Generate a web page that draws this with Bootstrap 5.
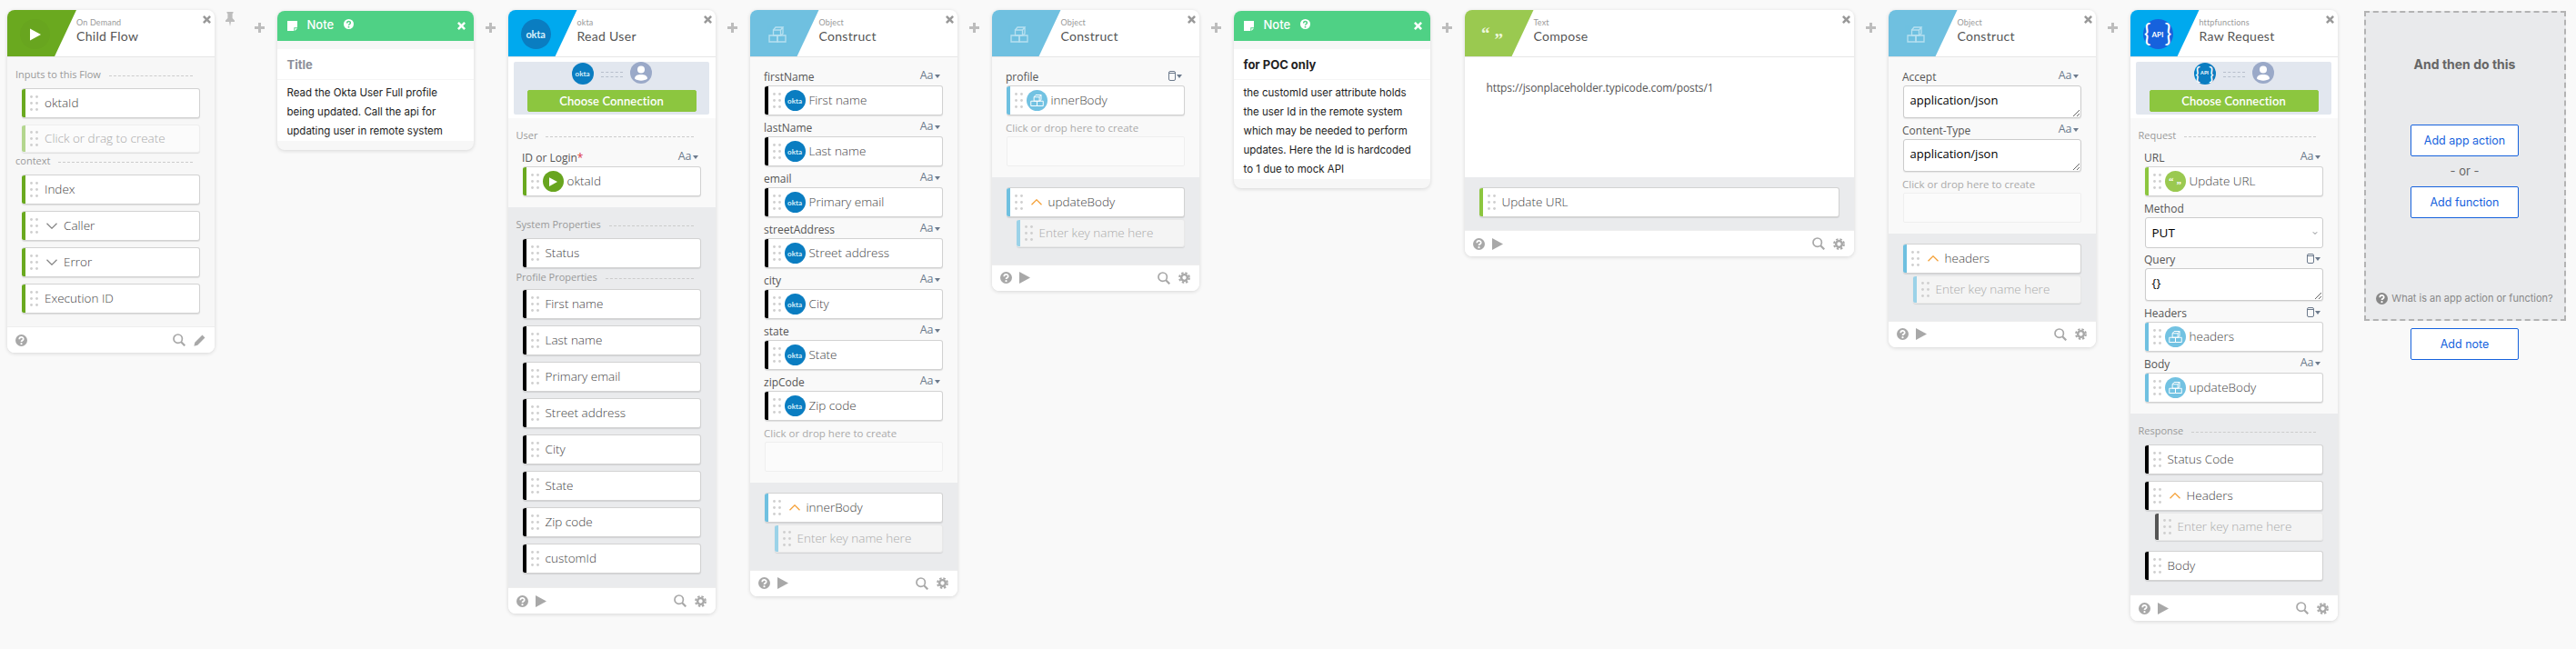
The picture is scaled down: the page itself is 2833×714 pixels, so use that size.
<!DOCTYPE html>
<html lang="en"><head><meta charset="utf-8"><title>Flow</title>
<link rel="stylesheet" href="https://cdn.jsdelivr.net/npm/bootstrap@5.3.0/dist/css/bootstrap.min.css">
<style>
html,body{height:100%;overflow:hidden}
body{background:#f9f9f9;font-family:"Open Sans","Liberation Sans",sans-serif;color:#555}
.canvas{padding:11px 0 0 8px;width:2833px;height:714px}
.flow-card{flex:0 0 228px;width:228px;background:#fff;border-radius:8px;box-shadow:0 1px 4px rgba(0,0,0,.14);overflow:hidden}
.wide-card{flex-basis:428px;width:428px}
.add-slot{flex:0 0 38px;height:38px;padding-top:14px;color:#bdbdbd;text-align:center;line-height:0}
.pin-slot{flex:0 0 34px;margin-top:-4px;color:#bdbdbd;text-align:center}
.first-add{flex-basis:34.5px;padding-right:4px}
.end-slot{flex:0 0 29px}
.hd{height:52px;border-bottom:1px solid #e6e6e6;position:relative}
.art{flex:0 0 76px;height:51px;clip-path:polygon(0 0,100% 0,68.5% 100%,0 100%);padding-left:14px;padding-top:10px}
.art-green{background:#6aa91f}.art-blue{background:#00a9ee}.art-sky{background:#6fc0e0}.art-lime{background:#9ac950}
.disc{width:33px;height:33px;border-radius:50%;color:#fff;flex:none}
.disc-green{background:#68a51f}.disc-okta{background:#0a7dc1}.disc-api{background:#1662dd}.disc-sky{background:#72c2e2}.disc-lime{background:#9ac950}
.faint{opacity:.5}
.okta-word{font:700 11px "Lato",sans-serif;letter-spacing:-.2px;color:#d8f0fb}
.hd-kicker{font:400 9px/11px "Lato",sans-serif;color:#999;margin-top:8px;letter-spacing:.15px}
.hd-title{font:400 14px/18px "Lato",sans-serif;color:#555;letter-spacing:.3px;margin-top:1px}
.close-x{position:absolute;right:4px;top:6px;color:#999;line-height:0}
.pane-w{background:#f9f9f9;padding:13px 16px 12px}
.pane-l{background:#f7f7f7;padding:11px 16px 14px}
.pane-g{background:#eaebed;padding:11px 16px 18.5px}
.pane-list{padding-bottom:15px}
.pane-req{padding-top:11px}
.pane-white{background:#fff;height:132px;padding:24px;font-size:12px;line-height:20px;color:#555;letter-spacing:-.1px}
.sec-head{display:flex;align-items:center;gap:9px;height:16px;margin:0 8px 7px -7px;font-size:11px;color:#999;white-space:nowrap}
.sec-head::after{content:"";flex:1;border-bottom:1px dashed #ccc;margin-top:3px}
.sec-up{margin-top:2px;margin-bottom:5px}
.sec-tight{margin-top:1px}
.sec-req{margin-bottom:8px}
.f-label{height:18px;display:flex;justify-content:space-between;align-items:center;font-size:12px;color:#555;margin-left:-.5px}
.f-hint{color:#aaa;font-size:11.5px}
.aa{color:#6c7a8c;font-size:12.5px;display:flex;align-items:center;gap:1px;margin-right:3px;margin-top:-3px}
.aa svg{flex:none}
.fld{height:33px;background:#fff;border:1px solid #d2d2d2;border-left:0;border-radius:3px;box-shadow:0 1px 1px rgba(0,0,0,.1);display:flex;align-items:center;font-size:13.5px;font-weight:300;color:#444;overflow:hidden;margin-bottom:7px}
.fld .bar{flex:0 0 4px;align-self:stretch}
.g{flex:0 0 auto;color:#cfcfcf;margin:0 7px 0 5px}
.bar-green{background:#6aa91f}.bar-black{background:#000}.bar-sky{background:#6fc0e0}.bar-lime{background:#8cc63f}.bar-pale{background:#9bd2e8}.bar-dark{background:#555}.bar-palegreen{background:#b4d68f}
.tail{margin-bottom:5px}
.flush{margin-bottom:2px}
.last{margin-bottom:0}
.ghost{height:31px;background:#f4f4f4;border-color:#e8e8e8;color:#aaa;margin-left:11px;margin-bottom:0}
.ghost-w{background:#fbfbfb;margin-left:0;margin-bottom:1px;border-color:#eee}
.ghost-i{margin-bottom:11px}
.mini{width:23px;height:23px;border-radius:50%;flex:none;color:#fff;margin:0 4px 0 -3px}
.mini .okta-word{font-size:8px;letter-spacing:0}
.chev{flex:none;margin:0 7px 0 2px;color:#888}
.chev-up{color:#f5a23a}
.drop{height:33px;background:#fbfbfb;border:1px solid #efefef;border-radius:2px}
.conn-wrap{background:#fff;height:67px;padding:5px 6.5px 4px}
.conn{background:#e2e7ef;height:58px;border-radius:2px;padding:0 14.5px;display:flex;flex-direction:column}
.conn-row{height:31px;gap:8px}
.conn-btn{height:24px;line-height:22px;padding:0;background:#8cc63f;border:1px solid #8cc63f;border-radius:2px;color:#fff;font:600 13px/22px "Lato",sans-serif;letter-spacing:.1px;width:100%}
.conn-disc{width:24px;height:24px;border-radius:50%;background:#0a7dc1;color:#fff;margin-top:1px}
.conn-disc .okta-word{font-size:8px;letter-spacing:0}
.dash-a{width:24px;height:6px;border-top:1px dashed #b7bfcc;border-bottom:1px dashed #b7bfcc;margin-top:-4px}
.txt-ctrl{height:36px;min-height:36px;padding:5px 7px;font-size:13px;line-height:20px;color:#000;border:1px solid #ccc;border-radius:3px;box-shadow:0 1px 1px rgba(0,0,0,.08);margin-bottom:5px;display:block;width:100%}
.sel-ctrl{height:34px;padding:3px 7px;font-size:13.5px;color:#000;border:1px solid #ccc;border-radius:3px;margin-bottom:4px;background-size:8px 5px;background-position:right 4px center}
.foot{height:29px;background:#fff;padding:0 10px 0 9px;color:#a8a8a8;border-top:1px solid #eee}
.foot .ms-auto{margin-right:1px}
.note-card{flex:0 0 216px;width:216px;margin-top:1px;background:#f7f7f7;border-radius:8px;box-shadow:0 1px 4px rgba(0,0,0,.14);overflow:hidden;padding-bottom:10px}
.note-hd{height:33px;background:#4fd185;color:#fff;padding:0 9px 0 11px;font:500 13px "Inter",sans-serif}
.note-name{margin-left:11px;margin-top:-4px}
.note-hd .qm{--q:#4fd185;margin:-4px 0 0 11px}
.note-title{margin-top:9px;height:34px;background:#fff;border-bottom:1px solid #f5f5f5;padding:0 11px;font:700 13px/34px "Inter",sans-serif;color:#1f1f1f}
.title-dim{color:#8c8f99}
.note-body{background:#fff;padding:4px 10px 0 11px;font:400 11.5px/21px "Inter",sans-serif;color:#222}
.end-col{flex:0 0 222px;width:222px;margin-top:1px}
.end-box{width:100%;height:341px;background:#e9eaec;border:2px dashed #b3b3b3;padding-top:47px;margin-bottom:8px;font:400 13px "Inter",sans-serif}
.end-title{font:700 14px/20px "Inter",sans-serif;color:#666;margin-bottom:56px}
.act-btn{width:118.5px;height:35px;background:#fff;border:1px solid #1662dd;border-radius:2px;color:#1662dd;font:400 12.5px "Inter",sans-serif;padding:0;flex:none}
.or-text{height:33px;line-height:33px;color:#666}
.end-help{margin-top:auto;margin-bottom:16px;font-size:11px;color:#888;gap:4px;white-space:nowrap}
.user-pic{flex:none}
.quote-big{font:700 19px/1 "Liberation Serif",serif;gap:5px;color:#eef7dc}
.quote-big span:first-child{margin-top:-2px}
.quote-big span:last-child{margin-top:12px}
.quote-small{font:700 11px/1 "Liberation Serif",serif;gap:3px}
.quote-small span:first-child{margin-top:-1px}
.quote-small span:last-child{margin-top:7px}
.brace{font:400 26px/1 "Lato",sans-serif;margin-top:-3px}
.api-in{font:700 8px/1 "Lato",sans-serif;margin:0 1px}
.api-tiny .brace{font-size:19px;margin-top:-2px}
.api-tiny .api-in{font-size:5.5px;margin:0}
.compose-pane{padding-bottom:14px}
.compose-pane .fld{margin-bottom:0}
</style></head>
<body>
<svg width="0" height="0" class="position-absolute">
<symbol id="i-x" viewBox="0 0 10 10"><path fill="currentColor" d="M2 0 5 3 8 0l2 2-3 3 3 3-2 2-3-3-3 3-2-2 3-3-3-3z"/></symbol>
<symbol id="i-grip" viewBox="0 0 9 17"><g fill="currentColor"><circle cx="1.5" cy="1.5" r="1.4"/><circle cx="7.5" cy="1.5" r="1.4"/><circle cx="1.5" cy="8.5" r="1.4"/><circle cx="7.5" cy="8.5" r="1.4"/><circle cx="1.5" cy="15.5" r="1.4"/><circle cx="7.5" cy="15.5" r="1.4"/></g></symbol>
<symbol id="i-help" viewBox="0 0 13 13"><circle cx="6.5" cy="6.5" r="6.5" fill="currentColor"/><path fill="none" stroke="var(--q,#fff)" stroke-width="1.8" d="M4.3 5.2c0-3 4.4-3 4.4-.3 0 1.6-2.2 1.6-2.2 3.2"/><circle cx="6.5" cy="10.2" r="1.1" fill="var(--q,#fff)"/></symbol>
<symbol id="i-play" viewBox="0 0 12 13"><path fill="currentColor" d="M0 0 12 6.5 0 13z"/></symbol>
<symbol id="i-search" viewBox="0 0 14 14"><circle cx="5.7" cy="5.7" r="4.7" fill="none" stroke="currentColor" stroke-width="1.7"/><path stroke="currentColor" stroke-width="2.2" d="m9 9 4.3 4.3"/></symbol>
<symbol id="i-gear" viewBox="0 0 14 14"><circle cx="7" cy="7" r="3.6" fill="none" stroke="currentColor" stroke-width="2.6"/><circle cx="7" cy="7" r="5.8" fill="none" stroke="currentColor" stroke-width="2.2" stroke-dasharray="2.6 2"/></symbol>
<symbol id="i-pencil" viewBox="0 0 14 14"><path fill="currentColor" d="M10.2.6 13.4 3.8 4.6 12.6.4 13.6 1.4 9.4z"/></symbol>
<symbol id="i-chev" viewBox="0 0 12 7"><path fill="none" stroke="currentColor" stroke-width="1.3" d="m.5.7 5.5 5.5L11.5.7"/></symbol>
<symbol id="i-up" viewBox="0 0 12 7"><path fill="none" stroke="currentColor" stroke-width="1.3" d="M.5 6.3 6 .8l5.5 5.5"/></symbol>
<symbol id="i-cube" viewBox="0 0 20 20"><g fill="none" stroke="currentColor" stroke-width="1.3"><path d="M5.5 5h8v6h-8z"/><path d="M5.5 5 8 2h8l-2.5 3M16 2v7l-2.5 2"/><path d="M1 11h9v7H1z"/><path d="M10 11h9v7h-9z"/></g></symbol>
<symbol id="i-note" viewBox="0 0 12 12"><path fill="currentColor" d="M0 0h12v8H8v4H0zM9 9h3l-3 3z"/></symbol>
<symbol id="i-plus" viewBox="0 0 11 11"><path fill="currentColor" d="M4 0h3v4h4v3H7v4H4V7H0V4h4z"/></symbol>
<symbol id="i-pin" viewBox="0 0 10 16"><path fill="currentColor" d="M1.5 0h7v1.2L7.6 2v5L10 9.6V11H6l-1 5-1-5H0V9.6L2.4 7V2l-.9-.8z"/></symbol>
<symbol id="i-can" viewBox="0 0 8 11"><g fill="none" stroke="currentColor"><rect x=".5" y=".5" width="7" height="10" rx="1.5"/><path d="M.5 2.5h7"/></g></symbol>
<symbol id="i-caret" viewBox="0 0 6 4"><path fill="currentColor" d="M0 0h6L3 4z"/></symbol>
<symbol id="i-user" viewBox="0 0 24 24"><circle cx="12" cy="12" r="12" fill="#9aa9c8"/><circle cx="12" cy="8.6" r="4" fill="#fff"/><path fill="#fff" d="M5 18.6c0-3.4 3-4.6 7-4.6s7 1.2 7 4.6c-3 2.8-11 2.8-14 0z"/></symbol>
</svg>

<main class="canvas d-flex align-items-start">

<section class="flow-card">
<header class="hd d-flex"><div class="art art-green"><div class="disc disc-green d-flex align-items-center justify-content-center"><svg width="12" height="14"><use href="#i-play"/></svg></div></div><div><div class="hd-kicker">On Demand</div><div class="hd-title">Child Flow</div></div><span class="close-x"><svg width="9" height="9"><use href="#i-x"/></svg></span></header>
<div class="pane-l">
<div class="sec-head">Inputs to this Flow</div>
<div class="fld"><span class="bar bar-green"></span><svg class="g" width="9" height="17"><use href="#i-grip"/></svg>oktaId</div>
<div class="fld ghost ghost-w"><span class="bar bar-palegreen"></span><svg class="g" width="9" height="17"><use href="#i-grip"/></svg>Click or drag to create</div>
<div class="sec-head sec-tight">context</div>
<div class="fld"><span class="bar bar-green"></span><svg class="g" width="9" height="17"><use href="#i-grip"/></svg>Index</div>
<div class="fld"><span class="bar bar-green"></span><svg class="g" width="9" height="17"><use href="#i-grip"/></svg><svg class="chev" width="12" height="7"><use href="#i-chev"/></svg>Caller</div>
<div class="fld"><span class="bar bar-green"></span><svg class="g" width="9" height="17"><use href="#i-grip"/></svg><svg class="chev" width="12" height="7"><use href="#i-chev"/></svg>Error</div>
<div class="fld last"><span class="bar bar-green"></span><svg class="g" width="9" height="17"><use href="#i-grip"/></svg>Execution ID</div>
</div>
<footer class="foot d-flex align-items-center gap-2"><svg width="13" height="13"><use href="#i-help"/></svg><svg class="ms-auto" width="14" height="14"><use href="#i-search"/></svg><svg width="13" height="13"><use href="#i-pencil"/></svg></footer>
</section>

<div class="pin-slot"><svg width="10" height="16"><use href="#i-pin"/></svg></div>
<div class="add-slot first-add"><svg width="11" height="11"><use href="#i-plus"/></svg></div>

<section class="note-card">
<div class="note-hd d-flex align-items-center"><svg width="11" height="11"><use href="#i-note"/></svg><span class="note-name">Note</span><svg class="qm" width="11" height="11"><use href="#i-help"/></svg><svg class="ms-auto" width="9" height="9"><use href="#i-x"/></svg></div>
<div class="note-title title-dim">Title</div>
<div class="note-body">Read the Okta User Full profile being updated. Call the api for updating user in remote system</div>
</section>

<div class="add-slot"><svg width="11" height="11"><use href="#i-plus"/></svg></div>

<section class="flow-card">
<header class="hd d-flex"><div class="art art-blue"><div class="disc disc-okta d-flex align-items-center justify-content-center"><span class="okta-word">okta</span></div></div><div><div class="hd-kicker">okta</div><div class="hd-title">Read User</div></div><span class="close-x"><svg width="9" height="9"><use href="#i-x"/></svg></span></header>
<div class="conn-wrap"><div class="conn"><div class="conn-row d-flex justify-content-center align-items-start"><span class="conn-disc d-flex align-items-center justify-content-center"><span class="okta-word">okta</span></span><span class="dash-a align-self-center"></span><svg class="user-pic" width="24" height="24"><use href="#i-user"/></svg></div><button type="button" class="btn conn-btn">Choose Connection</button></div></div>
<div class="pane-w pane-req"><div class="sec-head sec-req">User</div>
<div class="f-label"><span>ID or Login<span class="text-danger">*</span></span><span class="aa">Aa<svg width="6" height="4"><use href="#i-caret"/></svg></span></div>
<div class="fld last"><span class="bar bar-green"></span><svg class="g" width="9" height="17"><use href="#i-grip"/></svg><span class="mini disc-green d-flex align-items-center justify-content-center"><svg width="9" height="10"><use href="#i-play"/></svg></span>oktaId</div></div>
<div class="pane-g pane-list">
<div class="sec-head">System Properties</div>
<div class="fld flush"><span class="bar bar-black"></span><svg class="g" width="9" height="17"><use href="#i-grip"/></svg>Status</div>
<div class="sec-head sec-up">Profile Properties</div>
<div class="fld"><span class="bar bar-black"></span><svg class="g" width="9" height="17"><use href="#i-grip"/></svg>First name</div>
<div class="fld"><span class="bar bar-black"></span><svg class="g" width="9" height="17"><use href="#i-grip"/></svg>Last name</div>
<div class="fld"><span class="bar bar-black"></span><svg class="g" width="9" height="17"><use href="#i-grip"/></svg>Primary email</div>
<div class="fld"><span class="bar bar-black"></span><svg class="g" width="9" height="17"><use href="#i-grip"/></svg>Street address</div>
<div class="fld"><span class="bar bar-black"></span><svg class="g" width="9" height="17"><use href="#i-grip"/></svg>City</div>
<div class="fld"><span class="bar bar-black"></span><svg class="g" width="9" height="17"><use href="#i-grip"/></svg>State</div>
<div class="fld"><span class="bar bar-black"></span><svg class="g" width="9" height="17"><use href="#i-grip"/></svg>Zip code</div>
<div class="fld last"><span class="bar bar-black"></span><svg class="g" width="9" height="17"><use href="#i-grip"/></svg>customId</div>
</div>
<footer class="foot d-flex align-items-center gap-2"><svg width="13" height="13"><use href="#i-help"/></svg><svg width="12" height="13"><use href="#i-play"/></svg><svg class="ms-auto" width="14" height="14"><use href="#i-search"/></svg><svg width="13" height="13"><use href="#i-gear"/></svg></footer>
</section>

<div class="add-slot"><svg width="11" height="11"><use href="#i-plus"/></svg></div>

<section class="flow-card">
<header class="hd d-flex"><div class="art art-sky"><div class="disc d-flex align-items-center justify-content-center"><svg class="faint" width="20" height="20"><use href="#i-cube"/></svg></div></div><div><div class="hd-kicker">Object</div><div class="hd-title">Construct</div></div><span class="close-x"><svg width="9" height="9"><use href="#i-x"/></svg></span></header>
<div class="pane-w">
<div class="f-label"><span>firstName</span><span class="aa">Aa<svg width="6" height="4"><use href="#i-caret"/></svg></span></div>
<div class="fld tail"><span class="bar bar-black"></span><svg class="g" width="9" height="17"><use href="#i-grip"/></svg><span class="mini disc-okta d-flex align-items-center justify-content-center"><span class="okta-word">okta</span></span>First name</div>
<div class="f-label"><span>lastName</span><span class="aa">Aa<svg width="6" height="4"><use href="#i-caret"/></svg></span></div>
<div class="fld tail"><span class="bar bar-black"></span><svg class="g" width="9" height="17"><use href="#i-grip"/></svg><span class="mini disc-okta d-flex align-items-center justify-content-center"><span class="okta-word">okta</span></span>Last name</div>
<div class="f-label"><span>email</span><span class="aa">Aa<svg width="6" height="4"><use href="#i-caret"/></svg></span></div>
<div class="fld tail"><span class="bar bar-black"></span><svg class="g" width="9" height="17"><use href="#i-grip"/></svg><span class="mini disc-okta d-flex align-items-center justify-content-center"><span class="okta-word">okta</span></span>Primary email</div>
<div class="f-label"><span>streetAddress</span><span class="aa">Aa<svg width="6" height="4"><use href="#i-caret"/></svg></span></div>
<div class="fld tail"><span class="bar bar-black"></span><svg class="g" width="9" height="17"><use href="#i-grip"/></svg><span class="mini disc-okta d-flex align-items-center justify-content-center"><span class="okta-word">okta</span></span>Street address</div>
<div class="f-label"><span>city</span><span class="aa">Aa<svg width="6" height="4"><use href="#i-caret"/></svg></span></div>
<div class="fld tail"><span class="bar bar-black"></span><svg class="g" width="9" height="17"><use href="#i-grip"/></svg><span class="mini disc-okta d-flex align-items-center justify-content-center"><span class="okta-word">okta</span></span>City</div>
<div class="f-label"><span>state</span><span class="aa">Aa<svg width="6" height="4"><use href="#i-caret"/></svg></span></div>
<div class="fld tail"><span class="bar bar-black"></span><svg class="g" width="9" height="17"><use href="#i-grip"/></svg><span class="mini disc-okta d-flex align-items-center justify-content-center"><span class="okta-word">okta</span></span>State</div>
<div class="f-label"><span>zipCode</span><span class="aa">Aa<svg width="6" height="4"><use href="#i-caret"/></svg></span></div>
<div class="fld tail"><span class="bar bar-black"></span><svg class="g" width="9" height="17"><use href="#i-grip"/></svg><span class="mini disc-okta d-flex align-items-center justify-content-center"><span class="okta-word">okta</span></span>Zip code</div>
<div class="f-label f-hint">Click or drop here to create</div>
<div class="drop"></div>
</div>
<div class="pane-g">
<div class="fld flush"><span class="bar bar-sky"></span><svg class="g" width="9" height="17"><use href="#i-grip"/></svg><svg class="chev chev-up" width="12" height="7"><use href="#i-up"/></svg>innerBody</div>
<div class="fld ghost"><span class="bar bar-pale"></span><svg class="g" width="9" height="17"><use href="#i-grip"/></svg>Enter key name here</div>
</div>
<footer class="foot d-flex align-items-center gap-2"><svg width="13" height="13"><use href="#i-help"/></svg><svg width="12" height="13"><use href="#i-play"/></svg><svg class="ms-auto" width="14" height="14"><use href="#i-search"/></svg><svg width="13" height="13"><use href="#i-gear"/></svg></footer>
</section>

<div class="add-slot"><svg width="11" height="11"><use href="#i-plus"/></svg></div>

<section class="flow-card">
<header class="hd d-flex"><div class="art art-sky"><div class="disc d-flex align-items-center justify-content-center"><svg class="faint" width="20" height="20"><use href="#i-cube"/></svg></div></div><div><div class="hd-kicker">Object</div><div class="hd-title">Construct</div></div><span class="close-x"><svg width="9" height="9"><use href="#i-x"/></svg></span></header>
<div class="pane-w">
<div class="f-label"><span>profile</span><span class="aa"><svg width="8" height="11"><use href="#i-can"/></svg><svg width="6" height="4"><use href="#i-caret"/></svg></span></div>
<div class="fld tail"><span class="bar bar-sky"></span><svg class="g" width="9" height="17"><use href="#i-grip"/></svg><span class="mini disc-sky d-flex align-items-center justify-content-center"><svg width="15" height="15"><use href="#i-cube"/></svg></span>innerBody</div>
<div class="f-label f-hint">Click or drop here to create</div>
<div class="drop"></div>
</div>
<div class="pane-g">
<div class="fld flush"><span class="bar bar-sky"></span><svg class="g" width="9" height="17"><use href="#i-grip"/></svg><svg class="chev chev-up" width="12" height="7"><use href="#i-up"/></svg>updateBody</div>
<div class="fld ghost"><span class="bar bar-pale"></span><svg class="g" width="9" height="17"><use href="#i-grip"/></svg>Enter key name here</div>
</div>
<footer class="foot d-flex align-items-center gap-2"><svg width="13" height="13"><use href="#i-help"/></svg><svg width="12" height="13"><use href="#i-play"/></svg><svg class="ms-auto" width="14" height="14"><use href="#i-search"/></svg><svg width="13" height="13"><use href="#i-gear"/></svg></footer>
</section>

<div class="add-slot"><svg width="11" height="11"><use href="#i-plus"/></svg></div>

<section class="note-card">
<div class="note-hd d-flex align-items-center"><svg width="11" height="11"><use href="#i-note"/></svg><span class="note-name">Note</span><svg class="qm" width="11" height="11"><use href="#i-help"/></svg><svg class="ms-auto" width="9" height="9"><use href="#i-x"/></svg></div>
<div class="note-title">for POC only</div>
<div class="note-body">the customId user attribute holds the user Id in the remote system which may be needed to perform updates. Here the Id is hardcoded to 1 due to mock API</div>
</section>

<div class="add-slot"><svg width="11" height="11"><use href="#i-plus"/></svg></div>

<section class="flow-card wide-card">
<header class="hd d-flex"><div class="art art-lime"><div class="disc d-flex align-items-center justify-content-center quote-big"><span>“</span><span>”</span></div></div><div><div class="hd-kicker">Text</div><div class="hd-title">Compose</div></div><span class="close-x"><svg width="9" height="9"><use href="#i-x"/></svg></span></header>
<div class="pane-white">https://jsonplaceholder.typicode.com/posts/1</div>
<div class="pane-g compose-pane">
<div class="fld"><span class="bar bar-lime"></span><svg class="g" width="9" height="17"><use href="#i-grip"/></svg>Update URL</div>
</div>
<footer class="foot d-flex align-items-center gap-2"><svg width="13" height="13"><use href="#i-help"/></svg><svg width="12" height="13"><use href="#i-play"/></svg><svg class="ms-auto" width="14" height="14"><use href="#i-search"/></svg><svg width="13" height="13"><use href="#i-gear"/></svg></footer>
</section>

<div class="add-slot"><svg width="11" height="11"><use href="#i-plus"/></svg></div>

<section class="flow-card">
<header class="hd d-flex"><div class="art art-sky"><div class="disc d-flex align-items-center justify-content-center"><svg class="faint" width="20" height="20"><use href="#i-cube"/></svg></div></div><div><div class="hd-kicker">Object</div><div class="hd-title">Construct</div></div><span class="close-x"><svg width="9" height="9"><use href="#i-x"/></svg></span></header>
<div class="pane-w">
<div class="f-label"><span>Accept</span><span class="aa">Aa<svg width="6" height="4"><use href="#i-caret"/></svg></span></div>
<textarea class="form-control txt-ctrl" rows="1">application/json</textarea>
<div class="f-label"><span>Content-Type</span><span class="aa">Aa<svg width="6" height="4"><use href="#i-caret"/></svg></span></div>
<textarea class="form-control txt-ctrl" rows="1">application/json</textarea>
<div class="f-label f-hint">Click or drop here to create</div>
<div class="drop"></div>
</div>
<div class="pane-g">
<div class="fld flush"><span class="bar bar-sky"></span><svg class="g" width="9" height="17"><use href="#i-grip"/></svg><svg class="chev chev-up" width="12" height="7"><use href="#i-up"/></svg>headers</div>
<div class="fld ghost"><span class="bar bar-pale"></span><svg class="g" width="9" height="17"><use href="#i-grip"/></svg>Enter key name here</div>
</div>
<footer class="foot d-flex align-items-center gap-2"><svg width="13" height="13"><use href="#i-help"/></svg><svg width="12" height="13"><use href="#i-play"/></svg><svg class="ms-auto" width="14" height="14"><use href="#i-search"/></svg><svg width="13" height="13"><use href="#i-gear"/></svg></footer>
</section>

<div class="add-slot"><svg width="11" height="11"><use href="#i-plus"/></svg></div>

<section class="flow-card">
<header class="hd d-flex"><div class="art art-blue"><div class="disc disc-api d-flex align-items-center justify-content-center"><span class="brace">{</span><span class="api-in">API</span><span class="brace">}</span></div></div><div><div class="hd-kicker">httpfunctions</div><div class="hd-title">Raw Request</div></div><span class="close-x"><svg width="9" height="9"><use href="#i-x"/></svg></span></header>
<div class="conn-wrap"><div class="conn"><div class="conn-row d-flex justify-content-center align-items-start"><span class="conn-disc disc-api d-flex align-items-center justify-content-center api-tiny"><span class="brace">{</span><span class="api-in">API</span><span class="brace">}</span></span><span class="dash-a align-self-center"></span><svg class="user-pic" width="24" height="24"><use href="#i-user"/></svg></div><button type="button" class="btn conn-btn">Choose Connection</button></div></div>
<div class="pane-w pane-req"><div class="sec-head sec-req">Request</div>
<div class="f-label"><span>URL</span><span class="aa">Aa<svg width="6" height="4"><use href="#i-caret"/></svg></span></div>
<div class="fld tail"><span class="bar bar-lime"></span><svg class="g" width="9" height="17"><use href="#i-grip"/></svg><span class="mini disc-lime d-flex align-items-center justify-content-center quote-small"><span>“</span><span>”</span></span>Update URL</div>
<div class="f-label"><span>Method</span></div>
<select class="form-select sel-ctrl"><option>PUT</option></select>
<div class="f-label"><span>Query</span><span class="aa"><svg width="8" height="11"><use href="#i-can"/></svg><svg width="6" height="4"><use href="#i-caret"/></svg></span></div>
<textarea class="form-control txt-ctrl" rows="1">{}</textarea>
<div class="f-label"><span>Headers</span><span class="aa"><svg width="8" height="11"><use href="#i-can"/></svg><svg width="6" height="4"><use href="#i-caret"/></svg></span></div>
<div class="fld tail"><span class="bar bar-sky"></span><svg class="g" width="9" height="17"><use href="#i-grip"/></svg><span class="mini disc-sky d-flex align-items-center justify-content-center"><svg width="15" height="15"><use href="#i-cube"/></svg></span>headers</div>
<div class="f-label"><span>Body</span><span class="aa">Aa<svg width="6" height="4"><use href="#i-caret"/></svg></span></div>
<div class="fld last"><span class="bar bar-sky"></span><svg class="g" width="9" height="17"><use href="#i-grip"/></svg><span class="mini disc-sky d-flex align-items-center justify-content-center"><svg width="15" height="15"><use href="#i-cube"/></svg></span>updateBody</div>
</div>
<div class="pane-g pane-list">
<div class="sec-head">Response</div>
<div class="fld"><span class="bar bar-black"></span><svg class="g" width="9" height="17"><use href="#i-grip"/></svg>Status Code</div>
<div class="fld flush"><span class="bar bar-black"></span><svg class="g" width="9" height="17"><use href="#i-grip"/></svg><svg class="chev chev-up" width="12" height="7"><use href="#i-up"/></svg>Headers</div>
<div class="fld ghost ghost-i"><span class="bar bar-dark"></span><svg class="g" width="9" height="17"><use href="#i-grip"/></svg>Enter key name here</div>
<div class="fld last"><span class="bar bar-black"></span><svg class="g" width="9" height="17"><use href="#i-grip"/></svg>Body</div>
</div>
<footer class="foot d-flex align-items-center gap-2"><svg width="13" height="13"><use href="#i-help"/></svg><svg width="12" height="13"><use href="#i-play"/></svg><svg class="ms-auto" width="14" height="14"><use href="#i-search"/></svg><svg width="13" height="13"><use href="#i-gear"/></svg></footer>
</section>

<div class="end-slot"></div>

<aside class="end-col d-flex flex-column align-items-center">
<div class="end-box d-flex flex-column align-items-center">
<div class="end-title">And then do this</div>
<button type="button" class="btn act-btn">Add app action</button>
<div class="or-text">- or -</div>
<button type="button" class="btn act-btn">Add function</button>
<div class="end-help d-flex align-items-center"><svg width="13" height="13"><use href="#i-help"/></svg>What is an app action or function?</div>
</div>
<button type="button" class="btn act-btn">Add note</button>
</aside>
</main>
</body></html>
